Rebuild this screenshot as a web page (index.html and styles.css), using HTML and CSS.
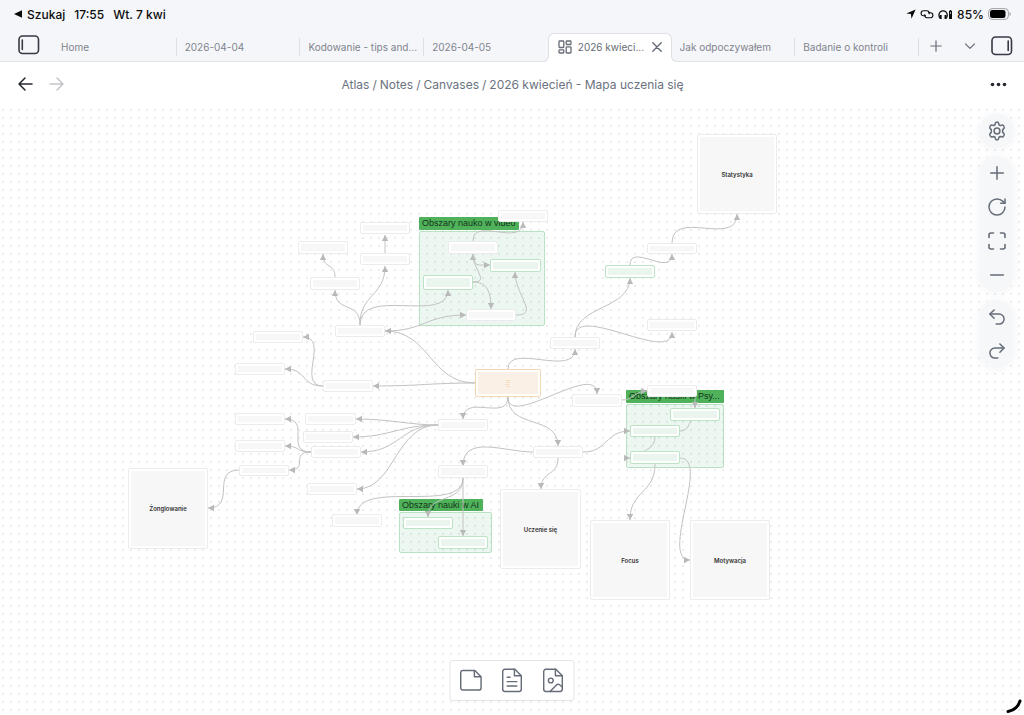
FILE: index.html
```html
<!DOCTYPE html>
<html lang="pl">
<head>
<meta charset="utf-8">
<meta name="viewport" content="width=device-width, initial-scale=1">
<title>2026 kwiecień - Mapa uczenia się</title>
<link rel="stylesheet" href="styles.css">
</head>
<body>
<div class="app">
  <div class="status">
    <div class="status-side">
      <a class="back-app" href="#"><svg width="9" height="8" viewBox="0 0 9 8"><path d="M0 4L8 .2V7.800Z" fill="currentColor"/></svg>Szukaj</a>
      <span>17:55</span>
      <span>Wt. 7 kwi</span>
    </div>
    <div class="status-side status-right">
      <svg width="10" height="10" viewBox="0 0 10 10"><path d="M9.600.4L.3 4.500 4.900 5.100 5.500 9.700Z" fill="currentColor"/></svg>
      <svg width="14" height="10" viewBox="0 0 14 10" fill="none" stroke="currentColor" stroke-width="1.100"><path d="M6 6.800H3.600a2.500 2.500 0 0 1 0-5h3.200a2.500 2.500 0 0 1 2.300 3.500"/><path d="M8 3.800h2.400a2.500 2.500 0 0 1 0 5H7.200a2.500 2.500 0 0 1-2.300-3.500"/></svg>
      <svg width="15" height="11" viewBox="0 0 15 11" fill="none" stroke="currentColor"><path d="M2.300 9.200A4.200 4.200 0 1 1 7.900 9.200" stroke-width="1.300"/><path d="M2.700 6v4M7.500 6v4" stroke-width="1.900"/><path d="M12.500 2v8" stroke-width="3"/><path d="M12.500 1v1" stroke-width="1.500"/><path d="M12.500 3v2" stroke="#aaa"/></svg>
      <span>85%</span>
      <svg width="23" height="12" viewBox="0 0 23 12"><rect x=".6" y=".6" width="19.800" height="10.800" rx="3.500" fill="none" stroke="#a2a4a7"/><rect x="2" y="2" width="15.500" height="8" rx="2.200" fill="#000"/><path d="M21.500 4v4q1.300-.6 1.300-2T21.500 4" fill="#a2a4a7"/></svg>
    </div>
  </div>

  <header class="tabbar">
    <button class="icon-btn side-toggle" aria-label="Left sidebar"><svg width="22" height="20" viewBox="0 0 22 20" fill="none" stroke="currentColor" stroke-width="1.600" stroke-linecap="round"><rect x="1" y="1" width="19.500" height="17.500" rx="3.500"/><path d="M4.300 5v9.500"/></svg></button>
    <nav class="tabs">
      <a class="tab" href="#"><span>Home</span></a>
      <a class="tab" href="#"><span>2026-04-04</span></a>
      <a class="tab" href="#"><span>Kodowanie - tips and...</span></a>
      <a class="tab before-active" href="#"><span>2026-04-05</span></a>
      <div class="tab active"><svg class="tab-icon" width="14" height="14" viewBox="0 0 14 14" fill="none" stroke="currentColor" stroke-width="1.300"><rect x="1" y="1" width="4.800" height="6.500" rx=".8"/><rect x="8.200" y="1" width="4.800" height="3.500" rx=".8"/><rect x="8.200" y="6.800" width="4.800" height="6.200" rx=".8"/><rect x="1" y="9.800" width="4.800" height="3.200" rx=".8"/></svg><span>2026 kwieci...</span><button class="icon-btn close" aria-label="Close"><svg width="10" height="10" viewBox="0 0 10 10" stroke="currentColor" stroke-width="1.400" stroke-linecap="round"><path d="M.8.8l8.400 8.400M9.200.8L.8 9.200"/></svg></button></div>
      <a class="tab" href="#"><span>Jak odpoczywałem</span></a>
      <a class="tab" href="#"><span>Badanie o kontroli</span></a>
    </nav>
    <div class="tab-actions">
      <button class="icon-btn" aria-label="New tab"><svg width="12" height="12" viewBox="0 0 12 12" stroke="currentColor" stroke-width="1.200" stroke-linecap="round"><path d="M6 .8v10.400M.8 6h10.400"/></svg></button>
      <button class="icon-btn" aria-label="Tab list"><svg width="12" height="12" viewBox="0 0 12 12" fill="none" stroke="currentColor" stroke-width="1.200" stroke-linecap="round" stroke-linejoin="round"><path d="M1.500 3.800L6 8.300l4.500-4.500"/></svg></button>
      <button class="icon-btn side-toggle" aria-label="Right sidebar"><svg width="22" height="20" viewBox="0 0 22 20" fill="none" stroke="currentColor" stroke-width="1.600" stroke-linecap="round"><rect x="1" y="1" width="19.500" height="17.500" rx="3.500"/><path d="M17.200 5v9.500"/></svg></button>
    </div>
  </header>

  <div class="view-header">
    <div class="history">
      <button class="icon-btn dark" aria-label="Back"><svg width="15" height="14" viewBox="0 0 15 14" fill="none" stroke="currentColor" stroke-width="1.500" stroke-linecap="round" stroke-linejoin="round"><path d="M14 7H1M7 1L1 7l6 6"/></svg></button>
      <button class="icon-btn faded" aria-label="Forward"><svg width="15" height="14" viewBox="0 0 15 14" fill="none" stroke="currentColor" stroke-width="1.500" stroke-linecap="round" stroke-linejoin="round"><path d="M1 7h13M8 1l6 6-6 6"/></svg></button>
    </div>
    <nav class="crumbs"><a href="#">Atlas</a><span>/</span><a href="#">Notes</a><span>/</span><a href="#">Canvases</a><span>/</span><span>2026 kwiecień - Mapa uczenia się</span></nav>
    <button class="icon-btn dark more" aria-label="More options"><svg width="17" height="5" viewBox="0 0 17 5" fill="currentColor"><circle cx="2.500" cy="2.500" r="1.800"/><circle cx="8.500" cy="2.500" r="1.800"/><circle cx="14.500" cy="2.500" r="1.800"/></svg></button>
  </div>

  <main class="canvas">
    <div class="board">
      <div class="group" style="--x:419;--y:231;--w:126;--h:95"></div>
      <div class="group" style="--x:399;--y:512;--w:93;--h:41"></div>
      <div class="group" style="--x:626;--y:404;--w:98;--h:64"></div>
      <div class="group-label" style="--x:419;--y:217;--w:100;--h:13">Obszary nauko w video</div>
      <div class="group-label" style="--x:399;--y:499;--w:84;--h:12">Obszary nauki w AI</div>
      <div class="group-label" style="--x:626;--y:390;--w:98;--h:13">Obszary nauki w Psy...</div>

      <svg class="edges" viewBox="127 133 650 468">
        <defs><marker id="arrow" markerUnits="userSpaceOnUse" markerWidth="7" markerHeight="7" refX="6" refY="3.500" orient="auto"><path d="M0 .3L6 3.500 0 6.700Z"/></marker></defs>
        <path d="M335 277C335 262 323 270 323 254"/>
        <path d="M385 253V235"/>
        <path d="M360 325C360 300 335 314 335 290"/>
        <path d="M360 325C360 293 385 297 385 266"/>
        <path d="M360 325C360 285 448 325 448 290"/>
        <path d="M385 331C425 331 425 315 466 315"/>
        <path d="M475 383C430 383 430 331 385 331"/>
        <path d="M475 383C430 383 420 386 373 386"/>
        <path d="M323 386C296 386 330 337 303 337"/>
        <path d="M323 386C300 386 308 369 285 369"/>
        <path d="M311 452C284 452 312 419 285 419"/>
        <path d="M311 452C295 452 301 446 285 446"/>
        <path d="M311 452C289 452 310 470 289 470"/>
        <path d="M239 470C210 470 237 508 208 508"/>
        <path d="M438 425C410 425 390 419 356 419"/>
        <path d="M438 425C400 425 390 437 353 437"/>
        <path d="M438 425C400 425 400 452 361 452"/>
        <path d="M438 425C395 425 395 489 357 489"/>
        <path d="M508 397C508 422 463 393 463 419"/>
        <path d="M508 397C508 430 597 360 597 394"/>
        <path d="M508 397C508 430 558 414 558 446"/>
        <path d="M508 369C508 342 575 378 575 349"/>
        <path d="M575 337C575 305 630 310 630 278"/>
        <path d="M575 337C575 302 672 365 672 332"/>
        <path d="M630 265C630 242 672 278 672 254"/>
        <path d="M672 243C672 208 737 248 737 214"/>
        <path d="M473 241C473 216 523 248 523 222"/>
        <path d="M473 282C490 282 473 270 473 254"/>
        <path d="M473 254C473 267 478 265 490 265"/>
        <path d="M473 282C486 282 491 290 491 309"/>
        <path d="M516 315C540 315 515 295 515 272"/>
        <path d="M533 452C505 452 463 434 463 466"/>
        <path d="M583 452C608 452 605 431 630 431"/>
        <path d="M558 458C558 477 541 470 541 489"/>
        <path d="M463 478C463 515 357 478 357 515"/>
        <path d="M463 478C463 505 428 492 428 517"/>
        <path d="M463 478V536"/>
        <path d="M622 400C634 400 634 391 647 391"/>
        <path d="M695 398V408"/>
        <path class="plain" d="M680 431C688 431 689 424 692 418"/>
        <path class="plain" d="M655 437C655 447 647 449 640 454"/>
        <path d="M624 458H630"/>
        <path d="M655 464C655 494 630 490 630 520"/>
        <path d="M680 458C711 458 659 560 690 560"/>
      </svg>

      <div class="node" style="--x:298;--y:241;--w:50;--h:13"></div>
      <div class="node" style="--x:360;--y:222;--w:50;--h:12"></div>
      <div class="node" style="--x:360;--y:253;--w:50;--h:12"></div>
      <div class="node" style="--x:310;--y:277;--w:50;--h:13"></div>
      <div class="node" style="--x:335;--y:325;--w:50;--h:12"></div>
      <div class="node" style="--x:253;--y:331;--w:50;--h:12"></div>
      <div class="node" style="--x:235;--y:363;--w:50;--h:12"></div>
      <div class="node" style="--x:323;--y:380;--w:50;--h:12"></div>
      <div class="node" style="--x:235;--y:413;--w:50;--h:12"></div>
      <div class="node" style="--x:305;--y:413;--w:51;--h:12"></div>
      <div class="node" style="--x:303;--y:431;--w:50;--h:12"></div>
      <div class="node" style="--x:235;--y:440;--w:50;--h:12"></div>
      <div class="node" style="--x:311;--y:446;--w:50;--h:12"></div>
      <div class="node" style="--x:239;--y:465;--w:50;--h:11"></div>
      <div class="node" style="--x:307;--y:483;--w:50;--h:12"></div>
      <div class="node" style="--x:332;--y:514;--w:50;--h:13"></div>
      <div class="node" style="--x:438;--y:419;--w:50;--h:12"></div>
      <div class="node" style="--x:438;--y:465;--w:50;--h:13"></div>
      <div class="node" style="--x:533;--y:446;--w:50;--h:12"></div>
      <div class="node" style="--x:572;--y:394;--w:50;--h:13"></div>
      <div class="node" style="--x:647;--y:385;--w:50;--h:12"></div>
      <div class="node" style="--x:647;--y:243;--w:50;--h:11"></div>
      <div class="node" style="--x:647;--y:319;--w:50;--h:12"></div>
      <div class="node" style="--x:550;--y:337;--w:50;--h:12"></div>
      <div class="node" style="--x:498;--y:210;--w:50;--h:12"></div>
      <div class="node" style="--x:448;--y:241;--w:50;--h:13"></div>
      <div class="node" style="--x:466;--y:309;--w:50;--h:12"></div>
      <div class="node green" style="--x:490;--y:259;--w:51;--h:13"></div>
      <div class="node green" style="--x:423;--y:275;--w:50;--h:15"></div>
      <div class="node green" style="--x:605;--y:265;--w:50;--h:13"></div>
      <div class="node green" style="--x:403;--y:517;--w:50;--h:12"></div>
      <div class="node green" style="--x:438;--y:536;--w:50;--h:13"></div>
      <div class="node green" style="--x:670;--y:408;--w:50;--h:13"></div>
      <div class="node green" style="--x:630;--y:425;--w:50;--h:12"></div>
      <div class="node green" style="--x:630;--y:451;--w:50;--h:13"></div>
      <div class="node orange" style="--x:475;--y:369;--w:66;--h:28"><svg width="6" height="8" viewBox="0 0 6 8" stroke="#f6dcc0"><path d="M0 1.500h5M1 3.500h4M0 5.500h4M1 7.500h4"/></svg></div>
      <div class="node" style="--x:697;--y:134;--w:80;--h:80">Statystyka</div>
      <div class="node" style="--x:128;--y:468;--w:80;--h:81">Żonglowanie</div>
      <div class="node" style="--x:500;--y:489;--w:81;--h:80">Uczenie się</div>
      <div class="node" style="--x:590;--y:520;--w:80;--h:80">Focus</div>
      <div class="node" style="--x:690;--y:520;--w:80;--h:80">Motywacja</div>
    </div>

    <div class="controls">
      <div class="control-group">
        <button class="icon-btn" aria-label="Settings"><svg width="20" height="20" viewBox="0 0 24 24" fill="none" stroke="currentColor" stroke-width="1.800" stroke-linejoin="round"><path d="M10 3.200a2 2 0 0 1 4 0l.4 1.300 1.500.9 1.400-.4a2 2 0 0 1 2.600.8l.5.9a2 2 0 0 1-.5 2.700l-1.100 1v3.200l1.100 1a2 2 0 0 1 .5 2.700l-.5.9a2 2 0 0 1-2.600.8l-1.400-.4-1.500.9-.4 1.300a2 2 0 0 1-4 0l-.4-1.300-1.500-.9-1.400.4a2 2 0 0 1-2.600-.8l-.5-.9a2 2 0 0 1 .5-2.700l1.100-1v-3.200l-1.100-1a2 2 0 0 1-.5-2.700l.5-.9a2 2 0 0 1 2.600-.8l1.400.4 1.500-.9Z"/><circle cx="12" cy="12" r="3.500"/></svg></button>
      </div>
      <div class="control-group">
        <button class="icon-btn" aria-label="Zoom in"><svg width="20" height="20" viewBox="0 0 20 20" fill="none" stroke="currentColor" stroke-width="1.500" stroke-linecap="round"><path d="M10 3.700v12.600M3.700 10h12.600"/></svg></button>
        <button class="icon-btn" aria-label="Reset zoom"><svg width="20" height="20" viewBox="0 0 20 20" fill="none" stroke="currentColor" stroke-width="1.500" stroke-linecap="round" stroke-linejoin="round"><path d="M18 10a8 8 0 1 1-8-8c2.200 0 4.400.9 6 2.400l2 1.900"/><path d="M18 2v4.300h-4.300"/></svg></button>
        <button class="icon-btn" aria-label="Zoom to fit"><svg width="20" height="20" viewBox="0 0 20 20" fill="none" stroke="currentColor" stroke-width="1.600" stroke-linecap="round" stroke-linejoin="round"><path d="M2 6.500V4a2 2 0 0 1 2-2h2.500M13.500 2H16a2 2 0 0 1 2 2v2.500M18 13.500V16a2 2 0 0 1-2 2h-2.500M6.500 18H4a2 2 0 0 1-2-2v-2.500"/></svg></button>
        <button class="icon-btn" aria-label="Zoom out"><svg width="20" height="20" viewBox="0 0 20 20" stroke="currentColor" stroke-width="1.500" stroke-linecap="round"><path d="M3.700 10h12.600"/></svg></button>
      </div>
      <div class="control-group undo">
        <button class="icon-btn" aria-label="Undo"><svg width="20" height="20" viewBox="0 0 24 24" fill="none" stroke="currentColor" stroke-width="1.800" stroke-linecap="round" stroke-linejoin="round"><path d="M8.500 13.500L3.500 8.500l5-5"/><path d="M3.500 8.500h11a5.500 5.500 0 0 1 0 12H11"/></svg></button>
        <button class="icon-btn" aria-label="Redo"><svg width="20" height="20" viewBox="0 0 24 24" fill="none" stroke="currentColor" stroke-width="1.800" stroke-linecap="round" stroke-linejoin="round"><path d="M15.500 13.500l5-5-5-5"/><path d="M20.500 8.500h-11a5.500 5.500 0 0 0 0 12H13"/></svg></button>
      </div>
    </div>

    <div class="card-menu">
      <button class="icon-btn" aria-label="Add card"><svg width="23" height="25" viewBox="0 0 24 26" fill="none" stroke="currentColor" stroke-width="1.500" stroke-linejoin="round"><path d="M16 2.500H3.500a2.200 2.200 0 0 0-2.200 2.200v16.100A2.200 2.200 0 0 0 3.500 23h16.800a2.200 2.200 0 0 0 2.200-2.200V9Z"/><path d="M15.500 2.500V9h7"/></svg></button>
      <button class="icon-btn" aria-label="Add note"><svg width="23" height="25" viewBox="0 0 24 26" fill="none" stroke="currentColor" stroke-width="1.500" stroke-linejoin="round" stroke-linecap="round"><path d="M15 1.300H4.500a2.200 2.200 0 0 0-2.200 2.200v18.700a2.200 2.200 0 0 0 2.200 2.200h15a2.200 2.200 0 0 0 2.200-2.200V8Z"/><path d="M14.500 1.300V8h7.200M7 9.700h3M7 14.200h10M7 18.700h10"/></svg></button>
      <button class="icon-btn" aria-label="Add media"><svg width="23" height="25" viewBox="0 0 24 26" fill="none" stroke="currentColor" stroke-width="1.500" stroke-linejoin="round" stroke-linecap="round"><path d="M15 1.300H4.500a2.200 2.200 0 0 0-2.200 2.200v18.700a2.200 2.200 0 0 0 2.200 2.200h15a2.200 2.200 0 0 0 2.200-2.200V8Z"/><path d="M14.500 1.300V8h7.200"/><circle cx="9.700" cy="13" r="2.500"/><path d="M9 24.400l6.600-6.600c1-1 2.200-1.200 3.300-.3l2.800 2.300"/></svg></button>
    </div>
    <svg class="corner" width="16" height="16" viewBox="0 0 16 16" fill="none" stroke="#000" stroke-width="3" stroke-linecap="round"><path d="M2 13.500Q11.500 11.500 14 3"/></svg>
  </main>
</div>
</body>
</html>
```
FILE: styles.css
```css
* { box-sizing: border-box; }

body {
  margin: 0;
  font-family: Inter, "Liberation Sans", sans-serif;
  font-size: 10px;
  color: #6b7280;
  background: #fff;
}

a { color: inherit; text-decoration: none; }
svg { display: block; flex: none; }

.app {
  display: flex;
  flex-direction: column;
  min-height: 100vh;
}

.icon-btn {
  display: flex;
  align-items: center;
  justify-content: center;
  padding: 0;
  border: 0;
  background: none;
  color: #666d78;
}
.dark { color: #25282f; }
.faded { color: #c3c5c9; }

.status {
  display: flex;
  justify-content: space-between;
  align-items: center;
  height: 28px;
  padding: 0 13px 0 14px;
  background: #f5f6f9;
  color: #0b0b0c;
  font-size: 12px;
  font-weight: 500;
}
.status-side { display: flex; align-items: center; gap: 9px; }
.status-right { gap: 4px; }
.back-app { display: flex; align-items: center; gap: 4px; }

.tabbar {
  display: flex;
  height: 34px;
  padding-top: 4px;
  background: #f5f6f9;
  border-bottom: 1px solid #dfe1e6;
}
.side-toggle { color: #363a45; }
.tabbar > .side-toggle { width: 53px; padding: 0 0 3px 5px; }
.tabs {
  display: grid;
  flex: 1;
  grid-auto-flow: column;
  grid-auto-columns: minmax(0, 1fr);
  min-width: 0;
}
.tab {
  position: relative;
  display: flex;
  align-items: center;
  min-width: 0;
  padding: 0 5px 0 8px;
  color: #7f848d;
}
.tab span {
  flex: 1;
  min-width: 0;
  overflow: hidden;
  white-space: nowrap;
  text-overflow: ellipsis;
}
.tab::after {
  content: "";
  position: absolute;
  right: 0;
  width: 1px;
  height: 18px;
  background: #dcdfe5;
}
.tab.before-active::after { display: none; }
.tab.active {
  gap: 6px;
  height: 29px;
  margin-top: 1px;
  padding: 0 9px 2px 9px;
  border: 1px solid #dfe1e6;
  border-bottom: 0;
  border-radius: 6px 6px 0 0;
  background: #fff;
  color: #666b75;
}
/* Curved feet that join the open tab to the line under the bar */
.tab.active::before,
.tab.active::after {
  content: "";
  position: absolute;
  bottom: 0;
  width: 6px;
  height: 6px;
  border: 0 solid #dfe1e6;
  border-bottom-width: 1px;
  background: none;
}
.tab.active::before {
  right: 100%;
  border-right-width: 1px;
  border-bottom-right-radius: 6px;
  box-shadow: 2px 2px 0 #fff;
}
.tab.active::after {
  right: auto;
  left: 100%;
  border-left-width: 1px;
  border-bottom-left-radius: 6px;
  box-shadow: -2px 2px 0 #fff;
}
.tab-actions {
  display: grid;
  grid-template-columns: 34px 34px 30px;
  width: 105px;
  padding-bottom: 2px;
}

.view-header {
  display: grid;
  grid-template-columns: 1fr auto 1fr;
  align-items: center;
  height: 45px;
  padding: 0 17px 1px 18px;
  font-size: 12px;
}
.history { display: flex; gap: 16px; }
.crumbs { display: flex; gap: 3px; }
.more { justify-self: end; }

.canvas {
  position: relative;
  flex: 1;
  display: grid;
  place-items: center;
  padding: 26px 120px 114px 0;
  background-image: radial-gradient(circle, #ebecee 0 1px, transparent 1px);
  background-size: 8px 8px;
  background-position: -1px -1px;
}
.board {
  --origin-x: 127;
  --origin-y: 133;
  position: relative;
  width: 650px;
  height: 468px;
}
.edges {
  position: absolute;
  inset: 0;
  fill: none;
  stroke: #c2c2c2;
}
.edges > path { marker-end: url(#arrow); }
.edges > .plain { marker-end: none; }
.edges marker path { fill: #b9b9b9; stroke: none; }

.group, .group-label, .node {
  position: absolute;
  left: calc((var(--x) - var(--origin-x)) * 1px);
  top: calc((var(--y) - var(--origin-y)) * 1px);
  width: calc(var(--w) * 1px);
  height: calc(var(--h) * 1px);
}
.group {
  border: 1px solid #b9e2c3;
  border-radius: 2px;
  background: rgba(60, 165, 95, 0.09);
}
.group-label {
  padding-left: 3px;
  border-radius: 1px;
  background: #4fb25b;
  color: #14321a;
  font-family: "Liberation Sans", Arial, sans-serif;
  font-size: 9px;
  line-height: 13px;
  white-space: nowrap;
}
.node {
  display: flex;
  align-items: center;
  justify-content: center;
  padding: 2px;
  border: 1px solid #ececec;
  border-radius: 2px;
  background: linear-gradient(#f7f7f7, #f7f7f7) content-box, #fff;
  color: #333;
  font-size: 6px;
  font-weight: 600;
}
.node.green {
  border-color: #bbe3c4;
  background: linear-gradient(#eaf6ed, #eaf6ed) content-box, #fff;
}
.node.orange {
  border-color: #f5d6b6;
  background: linear-gradient(#fbf0e5, #fbf0e5) content-box, #fff;
}

.controls {
  position: absolute;
  top: 7px;
  right: 10px;
  display: flex;
  flex-direction: column;
  gap: 8px;
}
.control-group {
  width: 35px;
  border-radius: 18px;
  background: #f5f7f9;
  box-shadow: 0 0 0 1px #fbfcfd, 0 1px 8px rgba(0, 0, 0, 0.06);
}
.control-group .icon-btn { width: 35px; height: 34px; }

.card-menu {
  position: absolute;
  left: 50%;
  bottom: 14px;
  transform: translateX(-50%);
  display: flex;
  border: 1px solid #e3e4e6;
  border-radius: 3px;
  background: #fff;
}
.card-menu .icon-btn { width: 41px; height: 39px; }
.corner {
  position: absolute;
  right: 2px;
  bottom: 1px;
}
```
